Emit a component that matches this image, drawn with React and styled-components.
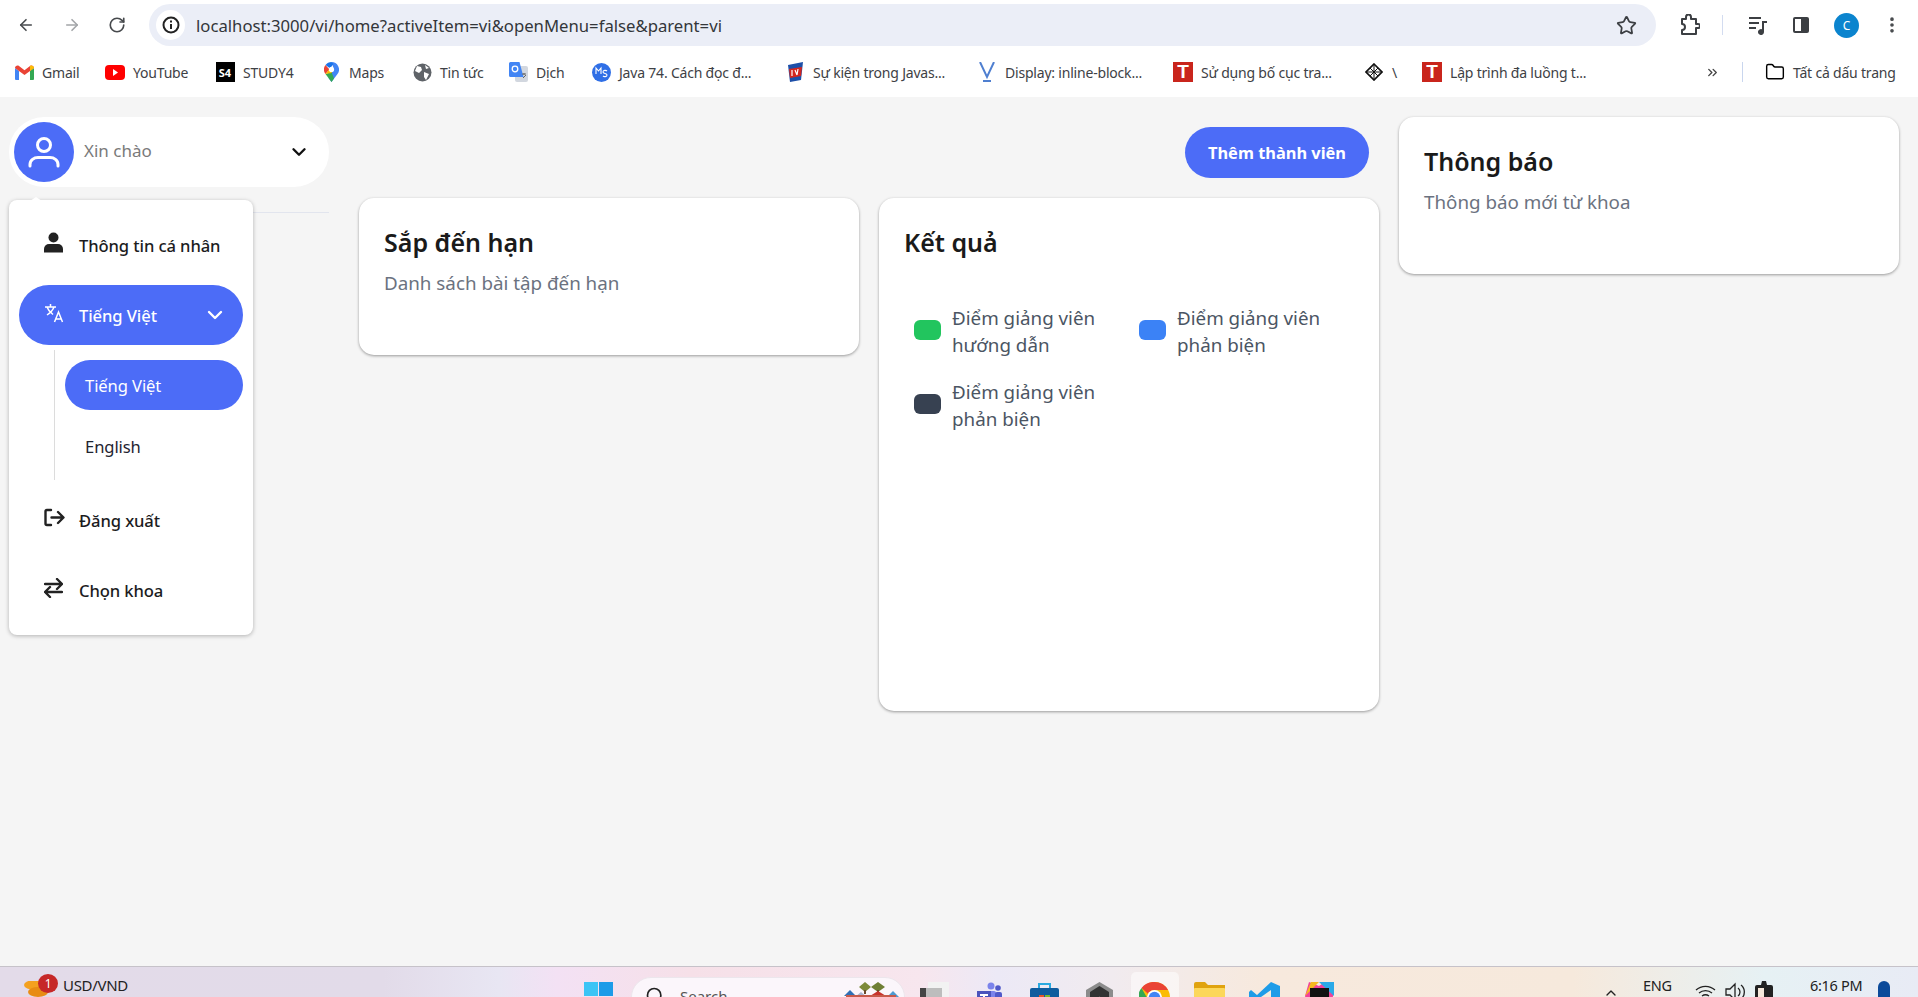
import React from 'react'
import styled, { createGlobalStyle } from 'styled-components'
import { ArrowLeft, ArrowRight, RotateCw, Star, ChevronDown, ChevronsRight, Folder, Search, ChevronUp, EllipsisVertical } from 'lucide-react'

const GlobalStyle = createGlobalStyle`
  html, body { margin: 0; height: 100%; overflow: hidden; }
  body { font-family: "Noto Sans", "Open Sans", sans-serif; background: #f5f5f5; }
  * { box-sizing: border-box; }
`

const Screen = styled.div`
  width: 1918px;
  height: 997px;
  display: flex;
  flex-direction: column;
  overflow: hidden;
`

/* browser chrome */
const Chrome = styled.div`
  height: 97px;
  background: #fff;
  flex: none;
`
const Toolbar = styled.div`
  height: 50px;
  padding: 4px 0 4px 17px;
  display: flex;
  align-items: center;
  color: #444746;
`
const NavIcon = styled.span`
  display: flex;
  width: ${p => p.$w}px;
  flex: none;
  color: ${p => p.$muted ? '#a3a5a8' : '#474a4d'};
`
const AddressBar = styled.div`
  width: 1507px;
  height: 42px;
  flex: none;
  margin: 0 24px 0 1px;
  border-radius: 21px;
  background: #ebeef7;
  display: flex;
  align-items: center;
  padding: 0 19px 0 7px;
`
const InfoBubble = styled.span`
  width: 29px;
  height: 30px;
  border-radius: 50%;
  background: #fff;
  display: flex;
  align-items: center;
  justify-content: center;
  flex: none;
  margin-right: 11px;
`
const Url = styled.span`
  font-size: 16.7px;
  color: #33363a;
  flex: 1;
  white-space: nowrap;
`
const Avatar = styled.span`
  width: 25px;
  height: 25px;
  border-radius: 50%;
  background: #0b84ce;
  color: #fff;
  font-size: 12px;
  display: flex;
  align-items: center;
  justify-content: center;
  flex: none;
  margin-right: 23px;
`
const ToolDivider = styled.span`
  width: 1px;
  height: 20px;
  background: #d3dcf0;
  flex: none;
  margin-right: 25px;
`
const Bookmarks = styled.div`
  height: 43px;
  padding: 1px 0 0 14px;
  display: flex;
  align-items: center;
`
const Bookmark = styled.div`
  display: flex;
  align-items: center;
  gap: 8px;
  margin-right: ${p => p.$after ?? 26}px;
  flex: none;
`
const BookmarkIcon = styled.span`
  width: 20px;
  height: 20px;
  display: flex;
  align-items: center;
  justify-content: center;
  flex: none;
`
const BookmarkLabel = styled.span`
  display: block;
  width: ${p => p.$w}px;
  font-size: 14px;
  letter-spacing: -0.2px;
  color: #3e4145;
  white-space: nowrap;
`
const S4Box = styled.span`
  width: 19px;
  height: 20px;
  background: #000;
  color: #fff;
  font-size: 11px;
  font-weight: 700;
  display: flex;
  align-items: center;
  justify-content: center;
`
const TBox = styled.span`
  width: 20px;
  height: 20px;
  background: #c9251c;
  color: #fff;
  font-family: "Liberation Sans", sans-serif;
  font-size: 19px;
  font-weight: 700;
  display: flex;
  align-items: center;
  justify-content: center;
`
const MoreBookmarks = styled.span`
  display: flex;
  width: 37px;
  flex: none;
  color: #444;
`
const BarDivider = styled.span`
  width: 1px;
  height: 20px;
  background: #c9d6ee;
  margin-right: 22px;
  flex: none;
`

/* page */
const Page = styled.main`
  flex: 1;
  min-height: 0;
  display: flex;
  padding: 20px 19px 0 9px;
  background: #f5f5f5;
`
const Sidebar = styled.aside`
  width: 320px;
  flex: none;
  position: relative;
  margin-right: 30px;
`
const UserPill = styled.div`
  height: 70px;
  border-radius: 35px;
  background: #fff;
  display: flex;
  align-items: center;
  padding: 0 19px 0 5px;
`
const UserAvatar = styled.span`
  width: 60px;
  height: 60px;
  border-radius: 50%;
  background: #4c6cf7;
  display: flex;
  align-items: center;
  justify-content: center;
  flex: none;
`
const Hello = styled.span`
  margin: -4px 0 0 10px;
  flex: 1;
  font-size: 17px;
  color: #7a7a7a;
`
const SideRule = styled.div`
  height: 1px;
  margin-top: 25px;
  background: #e2e5ee;
`
const Menu = styled.nav`
  position: absolute;
  top: 83px;
  left: 0;
  width: 244px;
  height: 435px;
  padding: 15px 10px;
  border-radius: 8px;
  background: #fff;
  box-shadow: 0 1px 4px rgba(0, 0, 0, 0.28);
  display: flex;
  flex-direction: column;
  gap: 10px;
  &::before {
    content: '';
    position: absolute;
    top: -3px;
    left: 21px;
    border-left: 6px solid transparent;
    border-right: 6px solid transparent;
    border-bottom: 4px solid #fff;
  }
`
const MenuItem = styled.div`
  height: 60px;
  flex: none;
  border-radius: 30px;
  padding: 0 16px 0 25px;
  display: flex;
  align-items: center;
  font-size: 16.6px;
  font-weight: 500;
  letter-spacing: -0.1px;
  background: ${p => p.$active ? '#4c6cf7' : 'transparent'};
  color: ${p => p.$active ? '#fff' : '#1c1c1e'};
`
const MenuIcon = styled.span`
  width: 35px;
  flex: none;
  display: flex;
  margin-top: -5px;
`
const MenuText = styled.span`
  flex: 1;
`
const SubList = styled.div`
  margin: -5px 0 0 35px;
  padding: 10px 0 9px 10px;
  height: 130px;
  flex: none;
  border-left: 1px solid #dcdcdc;
  display: flex;
  flex-direction: column;
  gap: 11px;
`
const SubItem = styled.div`
  height: 50px;
  flex: none;
  border-radius: 25px;
  padding-left: 20px;
  display: flex;
  align-items: center;
  font-size: 16.6px;
  letter-spacing: -0.1px;
  background: ${p => p.$active ? '#4c6cf7' : 'transparent'};
  color: ${p => p.$active ? '#fff' : '#1f2430'};
`
const Center = styled.section`
  width: 1020px;
  flex: none;
  margin-right: 20px;
  padding-top: 10px;
  display: flex;
  flex-direction: column;
  gap: 20px;
`
const ActionRow = styled.div`
  display: flex;
  justify-content: flex-end;
  padding-right: 10px;
`
const AddButton = styled.button`
  width: 184px;
  height: 51px;
  border: none;
  border-radius: 26px;
  background: #4c6cf7;
  color: #fff;
  font-family: inherit;
  font-size: 16.4px;
  font-weight: 700;
`
const CardRow = styled.div`
  display: flex;
  gap: 20px;
  align-items: flex-start;
`
const Card = styled.div`
  width: 500px;
  height: ${p => p.$h}px;
  flex: none;
  padding: 28px 25px;
  border-radius: 15px;
  background: #fff;
  box-shadow: 0 1px 3px rgba(0, 0, 0, 0.38);
`
const CardTitle = styled.h2`
  margin: 0;
  font-size: 25px;
  line-height: 32px;
  font-weight: 600;
  color: #1a1a1a;
`
const CardSub = styled.p`
  margin: 12px 0 0;
  font-size: 18.8px;
  line-height: 27px;
  color: #6b7280;
`
const Legend = styled.div`
  margin: 47px 0 0 10px;
  display: grid;
  grid-template-columns: 225px 225px;
  row-gap: 20px;
`
const LegendItem = styled.div`
  display: flex;
  align-items: center;
  gap: 11px;
`
const Swatch = styled.span`
  width: 27px;
  height: 20px;
  border-radius: 6px;
  flex: none;
  margin-bottom: 4px;
  background: ${p => p.$color};
`
const LegendText = styled.span`
  width: 170px;
  font-size: 18.8px;
  line-height: 27px;
  color: #4b5563;
`
const Aside = styled.aside`
  width: 500px;
  flex: none;
`

/* windows taskbar */
const Taskbar = styled.footer`
  height: 31px;
  flex: none;
  overflow: hidden;
  border-top: 1px solid #c6c2c9;
  background: linear-gradient(90deg, #e3dbe9 0%, #e2dbe9 20%, #e8e6f3 26%, #f3e1f4 29%, #f6e0e8 36%, #f7e6ee 48%, #ece9f6 52%, #f1ebef 58%, #f7e9dd 66%, #f6e9dc 82%, #e6f1f4 92%, #e8ebf5 100%);
  display: flex;
  padding-left: 14px;
`
const TaskLeft = styled.div`
  width: 557px;
  flex: none;
  display: flex;
  position: relative;
  padding: 9px 0 0 49px;
  font-size: 15px;
  letter-spacing: -0.3px;
  color: #222;
  line-height: 18px;
`
const CoinBadge = styled.span`
  position: absolute;
  left: 24px;
  top: 7px;
  width: 20px;
  height: 19px;
  border-radius: 50%;
  background: #c62828;
  color: #fff;
  font-size: 12px;
  display: flex;
  align-items: center;
  justify-content: center;
`
const CoinIcon = styled.span`
  position: absolute;
  left: 8px;
  top: 14px;
`
const TaskSlot = styled.span`
  width: 55px;
  height: 31px;
  flex: none;
  display: flex;
  justify-content: center;
  padding-top: ${p => p.$top ?? 15}px;
`
const ActiveSlot = styled(TaskSlot)`
  position: relative;
  &::before {
    content: '';
    position: absolute;
    top: 5px;
    left: 4px;
    width: 48px;
    height: 40px;
    border-radius: 5px;
    background: rgba(255, 255, 255, 0.5);
  }
  svg { position: relative; }
`
const SearchBox = styled.div`
  width: 274px;
  height: 40px;
  flex: none;
  margin: 10px 2px 0 5px;
  border-radius: 20px;
  background: #fbf6fb;
  border: 1px solid #ece6ec;
  display: flex;
  padding: 8px 5px 0 13px;
  font-size: 15px;
  line-height: 20px;
  color: #555;
`
const SearchLabel = styled.span`
  margin-left: 15px;
  flex: 1;
`
const SearchArt = styled.span`
  display: flex;
  margin-top: -4px;
`
const Tray = styled.div`
  margin-left: auto;
  display: grid;
  grid-template-columns: 40px 52px 30px 30px 55px 68px 40px;
  font-size: 14.5px;
  letter-spacing: -0.3px;
  color: #222;
`
const TrayCell = styled.span`
  display: block;
  padding-top: ${p => p.$top ?? 6}px;
  white-space: nowrap;
  line-height: 18px;
`

/* drawn icons */
const InfoIcon = () => (
  <svg width="18" height="18" viewBox="0 0 18 18" fill="none" stroke="#222" strokeWidth="2">
    <circle cx="9" cy="9" r="7.5" />
    <path d="M9 8v5M9 4.6v1.8" />
  </svg>
)
const ExtensionIcon = () => (
  <svg width="20" height="22" viewBox="0 0 20 22" fill="none" stroke="#3c3f43" strokeWidth="2" strokeLinejoin="round">
    <path d="M2 5h4V3a2 2 0 0 1 5 0v2h5v5h2a2 2 0 0 1 0 4h-2v6H2v-4a3 3 0 0 0 0-6z" />
  </svg>
)
const MediaIcon = () => (
  <svg width="20" height="20" viewBox="0 0 20 20" fill="#3c3f43">
    <path d="M1 2h12v2H1zM1 7h10v2H1zM1 12h7v2H1z" />
    <path d="M14 6h5v2h-3v9a3 3 0 1 1-2-2.8z" />
  </svg>
)
const PanelIcon = () => (
  <svg width="18" height="18" viewBox="0 0 18 18">
    <rect x="1" y="1" width="16" height="16" rx="2" fill="#3c3f43" />
    <rect x="3" y="3" width="6" height="12" fill="#fff" />
  </svg>
)
const GmailIcon = () => (
  <svg width="19" height="15" viewBox="0 0 19 15">
    <path d="M0 3l4 3v9H1a1 1 0 0 1-1-1z" fill="#4285f4" />
    <path d="M19 3l-4 3v9h3a1 1 0 0 0 1-1z" fill="#34a853" />
    <path d="M0 3c0-2 2.300-3 4-2l5.500 4.200L15 1c1.700-1 4 0 4 2l-4 3-5.500 4L4 6z" fill="#ea4335" />
    <path d="M15 1c1.700-1 4 0 4 2l-4 3z" fill="#fbbc04" />
  </svg>
)
const YoutubeIcon = () => (
  <svg width="20" height="15" viewBox="0 0 20 15">
    <rect width="20" height="15" rx="4" fill="#f00" />
    <path d="M8 4l5 3.500L8 11z" fill="#fff" />
  </svg>
)
const MapsIcon = () => (
  <svg width="15" height="20" viewBox="0 0 15 20">
    <path d="M7.500 0a7.500 7.500 0 0 1 6 12L7.500 20l-3-4 5-10z" fill="#4285f4" />
    <path d="M7.500 0a7.500 7.500 0 0 0-6 3l4 3 2-1.500L9.500 2z" fill="#1a73e8" />
    <path d="M1.500 3A7.500 7.500 0 0 0 1.500 12l4-4.500z" fill="#ea4335" />
    <path d="M1.500 12L7.500 20 10 16.500 7.500 10z" fill="#34a853" />
    <path d="M1.500 12l4-5 4-1-2 5z" fill="#fbbc04" />
    <circle cx="7.500" cy="7.500" r="2.600" fill="#fff" />
  </svg>
)
const GlobeIcon = () => (
  <svg width="19" height="19" viewBox="0 0 19 19">
    <circle cx="9.500" cy="9.500" r="9" fill="#5f6368" />
    <path d="M4 3l4 1 1 3-3 3-4-2zM11 9l5 2-3 6-2-3zM12 2l4 3-3 1z" fill="#fff" />
  </svg>
)
const TranslateBookmarkIcon = () => (
  <svg width="19" height="20" viewBox="0 0 19 20">
    <rect x="6" y="4" width="13" height="16" rx="2" fill="#d2d7df" />
    <path d="M1.500 0h9l4 15h-13a1.500 1.500 0 0 1-1.500-1.500V1.500A1.500 1.500 0 0 1 1.500 0z" fill="#4285f4" />
    <circle cx="6" cy="7" r="2.800" fill="none" stroke="#fff" strokeWidth="1.300" />
    <path d="M13 12h4M15 11v2M14 16l3-3" stroke="#666" strokeWidth="1" fill="none" />
  </svg>
)
const MsIcon = () => (
  <svg width="19" height="19" viewBox="0 0 19 19">
    <circle cx="9.500" cy="9.500" r="9.500" fill="#2f6fe6" />
    <path d="M4 11V5l2.500 3L9 5v6M11 13c1 1 4 1 4-1s-4-1-4-3 3-2 4-1" stroke="#fff" strokeWidth="1.100" fill="none" />
  </svg>
)
const EventIcon = () => (
  <svg width="19" height="20" viewBox="0 0 19 20">
    <path d="M2 3l15-3-2 18-11 2z" fill="#1d4fa8" />
    <path d="M3 7l13-2-1 9-11 2z" fill="#d3261f" />
    <path d="M6 8v6M9 8l2 5M12 7l-1 6" stroke="#fff" strokeWidth="1.200" />
  </svg>
)
const VueIcon = () => (
  <svg width="18" height="21" viewBox="0 0 18 21" fill="none" stroke="#4f7fd0" strokeWidth="2">
    <path d="M2 0l7 15 7-15" />
    <path d="M5 19h8" />
  </svg>
)
const PenIcon = () => (
  <svg width="18" height="18" viewBox="0 0 18 18" fill="none" stroke="#111" strokeWidth="1.700">
    <path d="M9 1l8 8-8 8-8-8z" />
    <path d="M1 9h16M9 1v16M5 5l8 8M13 5l-8 8" strokeWidth="1" />
  </svg>
)
const UserOutlineIcon = () => (
  <svg width="34" height="34" viewBox="0 0 34 34" fill="none" stroke="#fff" strokeWidth="3" strokeLinecap="round">
    <circle cx="17" cy="10" r="6.500" />
    <path d="M3 31v-1.500C3 25 7 22.500 11 22.500h12c4 0 8 2.500 8 7V31" />
  </svg>
)
const UserFillIcon = () => (
  <svg width="19" height="21" viewBox="0 0 19 21" fill="#222">
    <circle cx="9.500" cy="5.500" r="5" />
    <path d="M0 20.500V17a5 5 0 0 1 5-5h9a5 5 0 0 1 5 5v3.500z" />
  </svg>
)
const TranslateIcon = () => (
  <svg width="20" height="20" viewBox="0 0 20 20" fill="none" stroke="#fff" strokeWidth="1.500">
    <path d="M1 4h11M6.500 1v3M3 4c1 3 4 6 6 7.500M10 4c-1 3-4 6-7 8" />
    <path d="M10.500 19l4-10 4 10M12 16h5.500" />
  </svg>
)
const LogoutIcon = () => (
  <svg width="21" height="19" viewBox="0 0 21 19" fill="none" stroke="#222" strokeWidth="2.400" strokeLinecap="round" strokeLinejoin="round">
    <path d="M7 2H3a1.500 1.500 0 0 0-1.500 1.500v12A1.500 1.500 0 0 0 3 17h4" />
    <path d="M7.500 9.500H19M14 4l5.500 5.500L14 15" />
  </svg>
)
const SwapIcon = () => (
  <svg width="19" height="20" viewBox="0 0 19 20" fill="none" stroke="#222" strokeWidth="2.400" strokeLinecap="round" strokeLinejoin="round">
    <path d="M1 6h17M13 1l5 5-5 5" />
    <path d="M18 14H1M6 9l-5 5 5 5" />
  </svg>
)
const CoinsIcon = () => (
  <svg width="26" height="20" viewBox="0 0 26 20">
    <ellipse cx="13" cy="4" rx="11" ry="5" fill="#f4a11f" />
    <ellipse cx="16" cy="11" rx="10" ry="5" fill="#e88c14" />
  </svg>
)
const WindowsIcon = () => (
  <svg width="29" height="29" viewBox="0 0 29 29">
    <path d="M0 0h14v14H0z" fill="#3cc4f5" />
    <path d="M15 0h14v14H15z" fill="#1d9be8" />
    <path d="M0 15h14v14H0z" fill="#1d9be8" />
    <path d="M15 15h14v14H15z" fill="#0e78d4" />
  </svg>
)
const TreesIcon = () => (
  <svg width="55" height="22" viewBox="0 0 55 22">
    <path d="M21 10L15 5l6-5 6 5z" fill="#7d8a3a" />
    <path d="M34 10L27 5l7-5 7 5z" fill="#6f7f35" />
    <rect x="20" y="8" width="2" height="4" fill="#6b4a2b" />
    <rect x="33" y="8" width="2" height="4" fill="#6b4a2b" />
    <path d="M0 14l6-6 6 6z" fill="#2f6fb5" />
    <path d="M11 15l6-5 6 5z" fill="#a9b3cf" />
    <path d="M26 14l8-5 8 5z" fill="#c8332c" />
    <path d="M43 15l6-6 6 6z" fill="#4e9ad2" />
    <rect x="2" y="13" width="50" height="9" fill="#c65a4a" />
  </svg>
)
const TileIcon = () => (
  <svg width="29" height="28" viewBox="0 0 29 28">
    <rect x="8" width="21" height="22" fill="#f2f2f2" />
    <rect y="6" width="22" height="22" fill="#444" />
    <rect x="6" y="6" width="16" height="22" fill="#bdbdbd" />
  </svg>
)
const TeamsIcon = () => (
  <svg width="25" height="24" viewBox="0 0 25 24">
    <circle cx="14" cy="4" r="3.500" fill="#7b83eb" />
    <circle cx="21" cy="6" r="2.800" fill="#5059c9" />
    <rect x="10" y="9" width="9" height="14" rx="2" fill="#7b83eb" />
    <rect x="18" y="10" width="7" height="12" rx="2" fill="#5059c9" />
    <rect y="9" width="14" height="14" fill="#4b53bc" />
    <path d="M3 12h8v2H8v7H6v-7H3z" fill="#fff" />
  </svg>
)
const StoreIcon = () => (
  <svg width="29" height="28" viewBox="0 0 29 28">
    <path d="M9 6V2h11v4" fill="none" stroke="#2aa9e0" strokeWidth="2" />
    <rect y="6" width="29" height="22" rx="2" fill="#0f5c9e" />
    <rect x="9" y="13" width="5" height="5" fill="#e8562a" />
    <rect x="15" y="13" width="5" height="5" fill="#7cb82f" />
    <rect x="9" y="19" width="5" height="5" fill="#2aa9e0" />
    <rect x="15" y="19" width="5" height="5" fill="#fbb900" />
  </svg>
)
const ShieldIcon = () => (
  <svg width="27" height="30" viewBox="0 0 27 30">
    <path d="M13.500 0L27 8v14l-13.500 8L0 22V8z" fill="#8c8c8c" />
    <path d="M13.500 4L23 10v12h-7l-2.500-8L11 22H4V10z" fill="#333" />
  </svg>
)
const ChromeIcon = () => (
  <svg width="31" height="31" viewBox="0 0 31 31">
    <circle cx="15.500" cy="15.500" r="15.500" fill="#fbbc04" />
    <path d="M15.500 0A15.500 15.500 0 0 1 29 8H15.500a7.500 7.500 0 0 0-6.500 3.800L2.500 6A15.500 15.500 0 0 1 15.500 0z" fill="#ea4335" />
    <path d="M2.500 6L9 17.500 15 31A15.500 15.500 0 0 1 2.500 6z" fill="#34a853" />
    <circle cx="15.500" cy="15.500" r="7.500" fill="#fff" />
    <circle cx="15.500" cy="15.500" r="5.800" fill="#4285f4" />
  </svg>
)
const FolderTaskIcon = () => (
  <svg width="31" height="28" viewBox="0 0 31 28">
    <path d="M0 2a2 2 0 0 1 2-2h9l3 3h17v8H0z" fill="#e0a30f" />
    <rect y="6" width="31" height="22" rx="1" fill="#fcd75a" />
  </svg>
)
const VsIcon = () => (
  <svg width="31" height="30" viewBox="0 0 31 30">
    <path d="M22 0l9 4v22l-9 4-14-13-6 5-2-2v-10l2-2 6 5z" fill="#1e9ce8" />
    <path d="M22 8L12 15l10 7z" fill="#f5ebdd" />
  </svg>
)
const IntellijIcon = () => (
  <svg width="29" height="30" viewBox="0 0 29 30">
    <path d="M4 0l10 4 6-4 9 8-3 18-22 2-4-14z" fill="#f0429a" />
    <path d="M14 0h15v14z" fill="#2aa9e8" />
    <path d="M0 14L6 0h8z" fill="#f5b81f" />
    <rect x="5" y="6" width="19" height="19" fill="#111" />
  </svg>
)
const WifiIcon = () => (
  <svg width="21" height="20" viewBox="0 0 21 20" fill="none" stroke="#222" strokeWidth="1.300">
    <path d="M1 8a14 14 0 0 1 19 0M4 11a10 10 0 0 1 13 0M7 14a6 6 0 0 1 7 0" />
  </svg>
)
const VolumeIcon = () => (
  <svg width="20" height="22" viewBox="0 0 20 22" fill="none" stroke="#222" strokeWidth="1.300">
    <path d="M1 8h4l5-5v16l-5-5H1zM13 7a5 5 0 0 1 0 8M16 4a9 9 0 0 1 0 14" />
  </svg>
)
const BatteryIcon = () => (
  <svg width="20" height="22" viewBox="0 0 20 22">
    <path d="M7 0h4l1 4h-6zM2 4h14a2 2 0 0 1 2 2v16H0V6a2 2 0 0 1 2-2z" fill="#222" />
    <rect x="3" y="7" width="6" height="12" fill="#f6e9dc" />
  </svg>
)
const UserDotIcon = () => (
  <svg width="12" height="20" viewBox="0 0 12 20">
    <path d="M0 20V6a6 6 0 0 1 12 0v14z" fill="#0b4a9a" />
  </svg>
)

const bookmarks = [
  { icon: <GmailIcon />, label: 'Gmail', w: 37 },
  { icon: <YoutubeIcon />, label: 'YouTube', w: 57, after: 25 },
  { icon: <S4Box>S4</S4Box>, label: 'STUDY4', w: 53, after: 25 },
  { icon: <MapsIcon />, label: 'Maps', w: 36, after: 27 },
  { icon: <GlobeIcon />, label: 'Tin tức', w: 45, after: 23 },
  { icon: <TranslateBookmarkIcon />, label: 'Dịch', w: 28, after: 27 },
  { icon: <MsIcon />, label: 'Java 74. Cách đọc đ...', w: 141, after: 25 },
  { icon: <EventIcon />, label: 'Sự kiện trong Javas...', w: 138, after: 26 },
  { icon: <VueIcon />, label: 'Display: inline-block...', w: 143, after: 25 },
  { icon: <TBox>T</TBox>, label: 'Sử dụng bố cục tra...', w: 136, after: 27 },
  { icon: <PenIcon />, label: '\\', w: 6, after: 24 },
  { icon: <TBox>T</TBox>, label: 'Lập trình đa luồng t...', w: 141, after: 114 },
]

export default function App() {
  return (
    <Screen>
      <GlobalStyle />
      <Chrome>
        <Toolbar>
          <NavIcon $w={46}><ArrowLeft size={18} strokeWidth={2.2} /></NavIcon>
          <NavIcon $w={45} $muted><ArrowRight size={18} strokeWidth={2.2} /></NavIcon>
          <NavIcon $w={40}><RotateCw size={18} strokeWidth={2.2} /></NavIcon>
          <AddressBar>
            <InfoBubble><InfoIcon /></InfoBubble>
            <Url>localhost:3000/vi/home?activeItem=vi&amp;openMenu=false&amp;parent=vi</Url>
            <Star size={21} strokeWidth={2} color="#3c3f43" />
          </AddressBar>
          <NavIcon $w={42}><ExtensionIcon /></NavIcon>
          <ToolDivider />
          <NavIcon $w={44}><MediaIcon /></NavIcon>
          <NavIcon $w={42}><PanelIcon /></NavIcon>
          <Avatar>C</Avatar>
          <NavIcon $w={20}><EllipsisVertical size={20} strokeWidth={2.4} /></NavIcon>
        </Toolbar>
        <Bookmarks>
          {bookmarks.map((b, i) => (
            <Bookmark key={i} $after={b.after}>
              <BookmarkIcon>{b.icon}</BookmarkIcon>
              <BookmarkLabel $w={b.w}>{b.label}</BookmarkLabel>
            </Bookmark>
          ))}
          <MoreBookmarks><ChevronsRight size={15} strokeWidth={2.2} /></MoreBookmarks>
          <BarDivider />
          <Bookmark $after={0}>
            <BookmarkIcon><Folder size={20} strokeWidth={1.7} /></BookmarkIcon>
            <BookmarkLabel $w={106}>Tất cả dấu trang</BookmarkLabel>
          </Bookmark>
        </Bookmarks>
      </Chrome>

      <Page>
        <Sidebar>
          <UserPill>
            <UserAvatar><UserOutlineIcon /></UserAvatar>
            <Hello>Xin chào</Hello>
            <ChevronDown size={22} strokeWidth={2.6} color="#111" />
          </UserPill>
          <SideRule />
          <Menu>
            <MenuItem>
              <MenuIcon><UserFillIcon /></MenuIcon>
              <MenuText>Thông tin cá nhân</MenuText>
            </MenuItem>
            <MenuItem $active>
              <MenuIcon><TranslateIcon /></MenuIcon>
              <MenuText>Tiếng Việt</MenuText>
              <ChevronDown size={24} strokeWidth={2.4} color="#fff" />
            </MenuItem>
            <SubList>
              <SubItem $active>Tiếng Việt</SubItem>
              <SubItem>English</SubItem>
            </SubList>
            <MenuItem>
              <MenuIcon><LogoutIcon /></MenuIcon>
              <MenuText>Đăng xuất</MenuText>
            </MenuItem>
            <MenuItem>
              <MenuIcon><SwapIcon /></MenuIcon>
              <MenuText>Chọn khoa</MenuText>
            </MenuItem>
          </Menu>
        </Sidebar>

        <Center>
          <ActionRow>
            <AddButton>Thêm thành viên</AddButton>
          </ActionRow>
          <CardRow>
            <Card $h={157}>
              <CardTitle>Sắp đến hạn</CardTitle>
              <CardSub>Danh sách bài tập đến hạn</CardSub>
            </Card>
            <Card $h={513}>
              <CardTitle>Kết quả</CardTitle>
              <Legend>
                <LegendItem>
                  <Swatch $color="#22c55e" />
                  <LegendText>Điểm giảng viên hướng dẫn</LegendText>
                </LegendItem>
                <LegendItem>
                  <Swatch $color="#3b82f6" />
                  <LegendText>Điểm giảng viên phản biện</LegendText>
                </LegendItem>
                <LegendItem>
                  <Swatch $color="#374151" />
                  <LegendText>Điểm giảng viên phản biện</LegendText>
                </LegendItem>
              </Legend>
            </Card>
          </CardRow>
        </Center>

        <Aside>
          <Card $h={157}>
            <CardTitle>Thông báo</CardTitle>
            <CardSub>Thông báo mới từ khoa</CardSub>
          </Card>
        </Aside>
      </Page>

      <Taskbar>
        <TaskLeft>
          <CoinIcon><CoinsIcon /></CoinIcon>
          <CoinBadge>1</CoinBadge>
          USD/VND
        </TaskLeft>
        <TaskSlot><WindowsIcon /></TaskSlot>
        <SearchBox>
          <Search size={20} strokeWidth={2} color="#222" />
          <SearchLabel>Search</SearchLabel>
          <SearchArt><TreesIcon /></SearchArt>
        </SearchBox>
        <TaskSlot><TileIcon /></TaskSlot>
        <TaskSlot><TeamsIcon /></TaskSlot>
        <TaskSlot><StoreIcon /></TaskSlot>
        <TaskSlot><ShieldIcon /></TaskSlot>
        <ActiveSlot><ChromeIcon /></ActiveSlot>
        <TaskSlot><FolderTaskIcon /></TaskSlot>
        <TaskSlot><VsIcon /></TaskSlot>
        <TaskSlot><IntellijIcon /></TaskSlot>
        <Tray>
          <TrayCell $top={18}><ChevronUp size={16} strokeWidth={2} /></TrayCell>
          <TrayCell $top={9}>ENG</TrayCell>
          <TrayCell $top={15}><WifiIcon /></TrayCell>
          <TrayCell $top={14}><VolumeIcon /></TrayCell>
          <TrayCell $top={14}><BatteryIcon /></TrayCell>
          <TrayCell $top={9}>6:16 PM</TrayCell>
          <TrayCell $top={14}><UserDotIcon /></TrayCell>
        </Tray>
      </Taskbar>
    </Screen>
  )
}
